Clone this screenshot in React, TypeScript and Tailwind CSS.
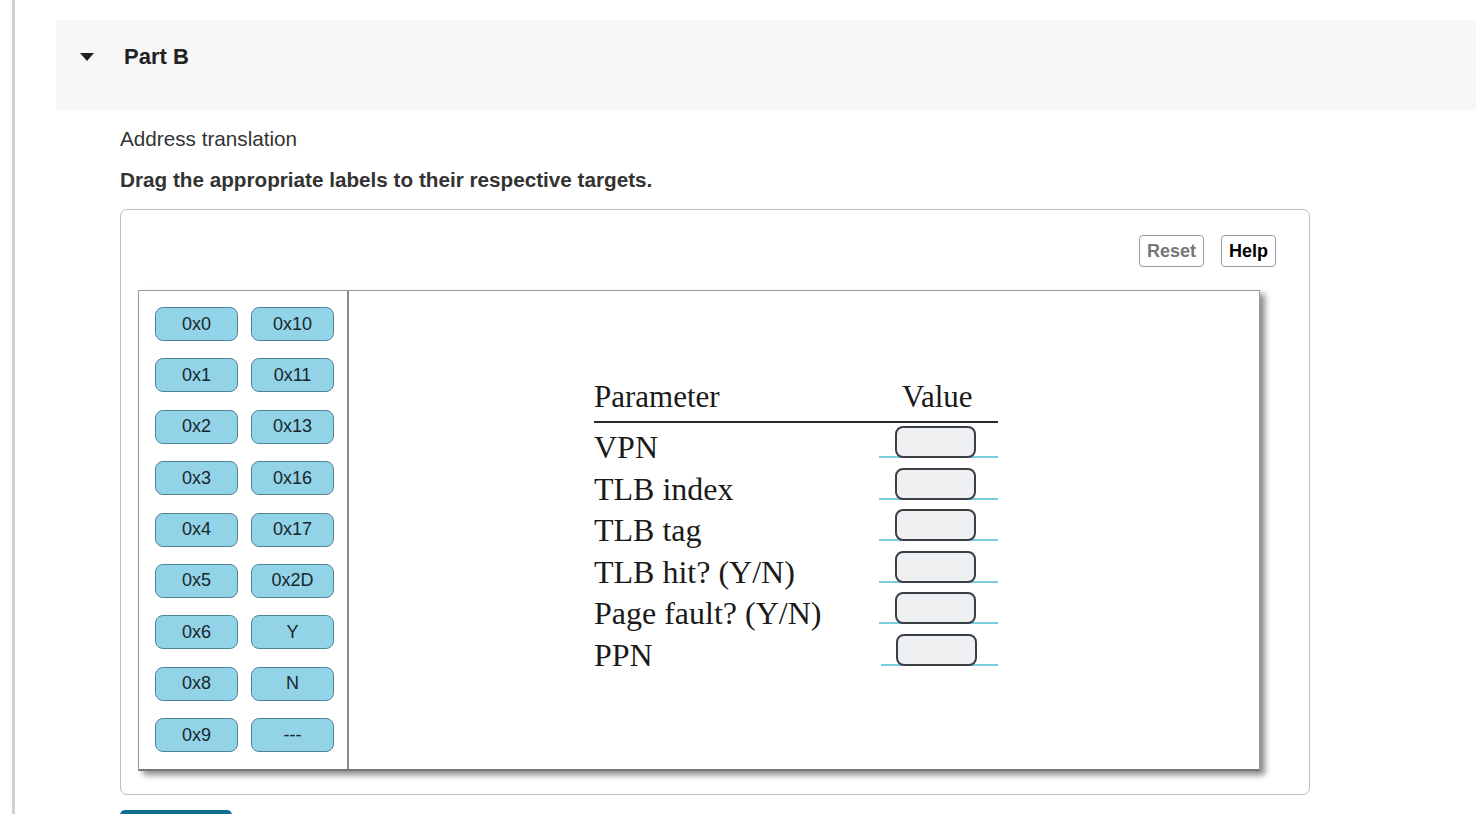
import React from "react";

const labels: [string, string][] = [
  ["0x0", "0x10"],
  ["0x1", "0x11"],
  ["0x2", "0x13"],
  ["0x3", "0x16"],
  ["0x4", "0x17"],
  ["0x5", "0x2D"],
  ["0x6", "Y"],
  ["0x8", "N"],
  ["0x9", "---"],
];

const params = ["VPN", "TLB index", "TLB tag", "TLB hit? (Y/N)", "Page fault? (Y/N)", "PPN"];

function Label({ text }: { text: string }) {
  return (
    <div className="w-[83px] h-[34px] rounded-[8px] border border-[#4f8397] bg-[#92d3e7] flex items-center justify-center text-[18px] text-[#18262b]">
      {text}
    </div>
  );
}

export default function App() {
  return (
    <div className="w-[1476px] h-[814px] overflow-hidden bg-white flex font-['Liberation_Sans',Arial,sans-serif] text-[#333]">
      {/* left rail */}
      <div className="ml-[12px] w-[3px] h-full shrink-0 bg-[#cbd3da]" />

      <div className="ml-[41px] flex-1 flex flex-col">
        <div className="mt-[20px] h-[90px] shrink-0 bg-[#f7f7f7] flex items-center pb-[18px]">
          <svg width="16" height="10" viewBox="0 0 16 10" className="ml-[23px] mt-[2px]">
            <path d="M1 1 L15 1 L8 9 Z" fill="#1f1f1f" />
          </svg>
          <h2 className="ml-[29px] text-[22px] font-bold text-[#222]">Part B</h2>
        </div>

        <div className="pl-[64px] shrink-0">
          <p className="mt-[17px] text-[20.7px] leading-[24px] text-[#333]">Address translation</p>
          <p className="mt-[17px] text-[20.7px] leading-[24px] font-bold text-[#333]">
            Drag the appropriate labels to their respective targets.
          </p>

          <div className="mt-[17px] w-[1190px] h-[586px] border border-[#bdbdbd] rounded-[7px] pl-[17px] pt-[25px]">
            <div className="flex justify-end gap-[17px] pr-[33px]">
              <button className="h-[32px] px-[7px] border border-[#9b9b9b] rounded-[4px] text-[18px] font-bold text-[#777]">
                Reset
              </button>
              <button className="h-[32px] px-[7px] border border-[#9b9b9b] rounded-[4px] text-[18px] font-bold text-black">
                Help
              </button>
            </div>

            <div className="mt-[23px] w-[1122px] h-[481px] border border-[#9a9a9a] border-b-2 border-b-[#777] shadow-[5px_4px_6px_rgba(0,0,0,0.45)] flex bg-white">
              {/* label bank */}
              <div className="w-[210px] border-r-2 border-[#8a8a8a] pl-[16px] pt-[16px] grid grid-cols-[83px_83px] gap-x-[13px] gap-y-[17.4px] content-start">
                {labels.map(([a, b]) => (
                  <React.Fragment key={a}>
                    <Label text={a} />
                    <Label text={b} />
                  </React.Fragment>
                ))}
              </div>

              {/* parameter table */}
              <div className="pl-[245px] pt-[75px] font-['Liberation_Serif','Times_New_Roman',serif] text-[#1a1a1a]">
                <div className="w-[404px] h-[57px] flex items-end border-b-2 border-[#2a2a2a] pb-[6px] text-[31px] leading-[36px]">
                  <div className="w-[308px]">Parameter</div>
                  <div>Value</div>
                </div>
                {params.map((p, i) => (
                  <div key={p} className="flex h-[41.6px] items-start">
                    <div className="w-[285px] mt-[6px] text-[32px] leading-[36px] h-[36px] whitespace-nowrap">{p}</div>
                    <div
                      className={`${i === params.length - 1 ? "ml-[2px] w-[117px]" : "w-[119px]"} h-[35px] pt-[3px] flex flex-col items-center border-b-2 border-[#7dcde0]`}
                    >
                      <div className="w-[81px] h-[32px] mr-[6px] rounded-[8px] border-2 border-[#3a3f45] bg-[#eef0f2] -mb-[2px]" />
                    </div>
                  </div>
                ))}
              </div>
            </div>
          </div>

          <div className="mt-[15px] w-[112px] h-[12px] rounded-t-[5px] bg-[#0d6f8d]" />
        </div>
      </div>
    </div>
  );
}
